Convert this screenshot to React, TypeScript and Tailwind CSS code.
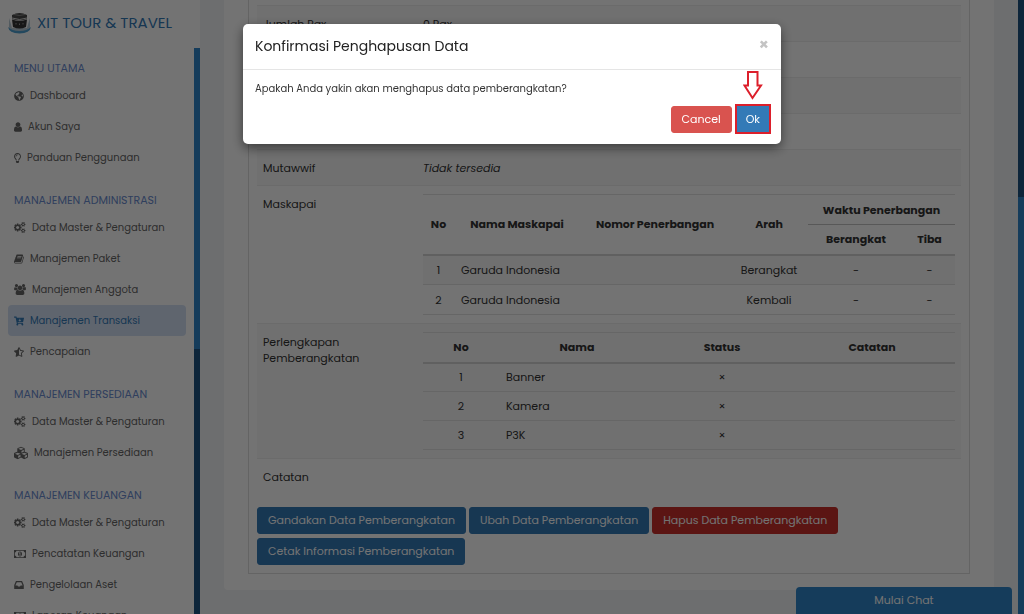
import type { ReactNode } from "react";
import {
  FaCartArrowDown,
  FaCubes,
  FaGlobeAmericas,
  FaRegLightbulb,
  FaStarHalfAlt,
} from "react-icons/fa";

type MenuItem = { label: string; icon: ReactNode; active?: boolean };
type MenuGroup = { title: string; items: MenuItem[] };

function UserIcon() {
  return (
    <svg viewBox="256 128 1280 1536" className="h-[10px] w-[8px]" fill="currentColor">
      <path d="M1536 1399q0 109-62.5 187t-150.5 78h-854q-88 0-150.5-78t-62.5-187q0-85 8.5-160.5t31.5-152 58.5-131 94-89 134.5-34.5q131 128 313 128t313-128q76 0 134.5 34.5t94 89 58.5 131 31.5 152 8.5 160.5zm-256-887q0 159-112.5 271.5t-271.5 112.5-271.5-112.5-112.5-271.5 112.5-271.5 271.5-112.5 271.5 112.5 112.5 271.5z" />
    </svg>
  );
}

function CogsIcon() {
  return (
    <svg viewBox="0 0 1920 1792" className="h-[11px] w-[12px]" fill="currentColor">
      <path d="M832 896q0-106-75-181t-181-75-181 75-75 181 75 181 181 75 181-75 75-181zm768 512q0-52-38-90t-90-38-90 38-38 90q0 53 37.5 90.5t90.5 37.5 90.5-37.5 37.5-90.5zm0-1024q0-52-38-90t-90-38-90 38-38 90q0 53 37.5 90.5t90.5 37.5 90.5-37.5 37.5-90.5zm-384 421v185q0 10-7 19.5t-16 10.5l-155 24q-11 35-32 76 34 48 90 115 7 11 7 20 0 12-7 19-23 30-82.5 89.5t-78.5 59.5q-11 0-21-7l-115-90q-37 19-77 31-11 108-23 155-7 24-30 24h-186q-11 0-20-7.5t-10-17.5l-23-153q-34-10-75-31l-118 89q-7 7-20 7-11 0-21-8-144-133-144-160 0-9 7-19 10-14 41-53t47-61q-23-44-35-82l-152-24q-10-1-17-9.5t-7-19.5v-185q0-10 7-19.5t16-10.5l155-24q11-35 32-76-34-48-90-115-7-11-7-20 0-12 7-20 22-30 82-89t79-59q11 0 21 7l115 90q34-18 77-32 11-108 23-154 7-24 30-24h186q11 0 20 7.5t10 17.5l23 153q34 10 75 31l118-89q8-7 20-7 11 0 21 8 144 133 144 160 0 8-7 19-12 16-42 54t-45 60q23 48 34 82l152 23q10 2 17 10.5t7 19.5zm640 533v140q0 16-149 31-12 27-30 52 51 113 51 138 0 4-4 7-122 71-124 71-8 0-46-47t-52-68q-20 2-30 2t-30-2q-14 21-52 68t-46 47q-2 0-124-71-4-3-4-7 0-25 51-138-18-25-30-52-149-15-149-31v-140q0-16 149-31 13-29 30-52-51-113-51-138 0-4 4-7 4-2 35-20t59-34 30-16q8 0 46 46.5t52 67.5q20-2 30-2t30 2q51-71 92-112l6-2q4 0 124 70 4 3 4 7 0 25-51 138 17 23 30 52 149 15 149 31zm0-1024v140q0 16-149 31-12 27-30 52 51 113 51 138 0 4-4 7-122 71-124 71-8 0-46-47t-52-68q-20 2-30 2t-30-2q-14 21-52 68t-46 47q-2 0-124-71-4-3-4-7 0-25 51-138-18-25-30-52-149-15-149-31v-140q0-16 149-31 13-29 30-52-51-113-51-138 0-4 4-7 4-2 35-20t59-34 30-16q8 0 46 46.5t52 67.5q20-2 30-2t30 2q51-71 92-112l6-2q4 0 124 70 4 3 4 7 0 25-51 138 17 23 30 52 149 15 149 31z" />
    </svg>
  );
}

function BookIcon() {
  return (
    <svg viewBox="64 128 1664 1536" className="h-[10px] w-[10px]" fill="currentColor">
      <path d="M1703 478q40 57 18 129l-275 906q-19 64-76.5 107.5t-122.5 43.5h-923q-77 0-148.5-53.5t-99.5-131.5q-24-67-2-127 0-4 3-27t4-37q1-8-3-21.5t-3-19.5q2-11 8-21t16.5-23.5 16.5-23.5q23-38 45-91.5t30-91.5q3-10 .5-30t-.5-28q3-11 17-28t17-23q21-36 42-92t25-90q1-9-2.5-32t.5-28q4-13 22-30.5t22-22.5q19-26 42.5-84.5t27.5-96.5q1-8-3-25.5t-2-26.5q2-8 9-18t18-23 17-21q8-12 16.5-30.5t15-35 16-36 19.5-32 26.5-23.5 36-11.5 47.5 5.5l-1 3q38-9 51-9h761q74 0 114 56t18 130l-274 906q-36 119-71.5 153.5t-128.5 34.5h-869q-27 0-38 15-11 16-1 43 24 70 144 70h923q29 0 56-15.5t35-41.5l300-987q7-22 5-57 38 15 59 43zm-1064 2q-4 13 2 22.5t20 9.5h608q13 0 25.5-9.5t16.5-22.5l21-64q4-13-2-22.5t-20-9.5h-608q-13 0-25.5 9.5t-16.5 22.5zm-83 256q-4 13 2 22.5t20 9.5h608q13 0 25.5-9.5t16.5-22.5l21-64q4-13-2-22.5t-20-9.5h-608q-13 0-25.5 9.5t-16.5 22.5z" />
    </svg>
  );
}

function UsersIcon() {
  return (
    <svg viewBox="64 0 1920 1792" className="h-[11px] w-[12px]" fill="currentColor">
      <path d="M657 896q-162 5-265 128h-134q-82 0-138-40.5t-56-118.5q0-353 124-353 6 0 43.5 21t97.5 42.5 119 21.5q67 0 133-23-5 37-5 66 0 159 93 294zm1071 637q0 120-73 189.5t-194 69.5h-874q-121 0-194-69.5t-73-189.5q0-53 3.5-103.5t14-109 26.5-108.5 43-97.5 62-81 85.5-53.5 111.5-20q10 0 43 21.5t73 48 107 48 135 21.5 135-21.5 107-48 73-48 43-21.5q61 0 111.5 20t85.5 53.5 62 81 43 97.5 26.5 108.5 14 109 3.5 103.5zm-1024-1277q0 106-75 181t-181 75-181-75-75-181 75-181 181-75 181 75 75 181zm704 384q0 159-112.5 271.5t-271.5 112.5-271.5-112.5-112.5-271.5 112.5-271.5 271.5-112.5 271.5 112.5 112.5 271.5zm576 225q0 78-56 118.5t-138 40.5h-134q-103-123-265-128 93-135 93-294 0-29-5-66 66 23 133 23 59 0 119-21.5t97.5-42.5 43.5-21q124 0 124 353zm-128-609q0 106-75 181t-181 75-181-75-75-181 75-181 181-75 181 75 75 181z" />
    </svg>
  );
}

function MoneyIcon() {
  return (
    <svg viewBox="0 256 1920 1280" className="h-[8px] w-[12px]" fill="currentColor">
      <path d="M768 1152h384v-96h-128v-448h-114l-148 137 77 80q42-37 55-57h2v288h-128v96zm512-256q0 70-21 142t-59.5 134-101.5 101-138 39-138-39-101.5-101-59.5-134-21-142 21-142 59.5-134 101.5-101 138-39 138 39 101.5 101 59.5 134 21 142zm512 256v-512q-106 0-181-75t-75-181h-1152q0 106-75 181t-181 75v512q106 0 181 75t75 181h1152q0-106 75-181t181-75zm128-832v1152q0 26-19 45t-45 19h-1792q-26 0-45-19t-19-45v-1152q0-26 19-45t45-19h1792q26 0 45 19t19 45z" />
    </svg>
  );
}

function InboxIcon() {
  return (
    <svg viewBox="128 256 1536 1280" className="h-[8px] w-[10px]" fill="currentColor">
      <path d="M1151 960h316q-1-3-2.5-8.5t-2.5-7.5l-212-496h-708l-212 496q-1 3-2.5 8.5t-2.5 7.5h316l95 192h320zm513 30v482q0 26-19 45t-45 19h-1408q-26 0-45-19t-19-45v-482q0-62 25-123l238-552q10-25 36.5-42t52.5-17h832q26 0 52.5 17t36.5 42l238 552q25 61 25 123z" />
    </svg>
  );
}

function Logo() {
  return (
    <svg viewBox="0 0 23 22" className="h-[22px] w-[23px]">
      <path d="M1 6Q3 12 4 16h15Q20 12 22 6v11Q17 20 11.500 20T1 17z" fill="#b9c9d4" />
      <path d="M0 15Q4 19 11.500 19T23 15Q22 21 11.500 21.500 1 21 0 15z" fill="#4f9fd0" />
      <path d="M4 3Q11.500-1 19 3v4Q11.500 9.500 4 7z" fill="#4a4a4a" />
      <path d="M4 7.500Q11.500 10 19 7.500L18 15Q11.500 18 5 15z" fill="#333" />
      <path d="M4 6Q11.500 9 19 6" fill="none" stroke="#cfcfcf" strokeWidth="1" />
      <path d="M6 2.500Q11.500 4.500 17 2.500" fill="none" stroke="#999" strokeWidth="0.800" />
      <path d="M8 11v1.500M11.500 11.500V13M15 11v1.500" stroke="#999" strokeWidth="1" />
    </svg>
  );
}

const menu: MenuGroup[] = [
  {
    title: "MENU UTAMA",
    items: [
      { label: "Dashboard", icon: <FaGlobeAmericas className="size-[10px]" /> },
      { label: "Akun Saya", icon: <UserIcon /> },
      { label: "Panduan Penggunaan", icon: <FaRegLightbulb className="h-[10px] w-[7px]" /> },
    ],
  },
  {
    title: "MANAJEMEN ADMINISTRASI",
    items: [
      { label: "Data Master & Pengaturan", icon: <CogsIcon /> },
      { label: "Manajemen Paket", icon: <BookIcon /> },
      { label: "Manajemen Anggota", icon: <UsersIcon /> },
      { label: "Manajemen Transaksi", icon: <FaCartArrowDown className="size-[10px]" />, active: true },
      { label: "Pencapaian", icon: <FaStarHalfAlt className="size-[10px]" /> },
    ],
  },
  {
    title: "MANAJEMEN PERSEDIAAN",
    items: [
      { label: "Data Master & Pengaturan", icon: <CogsIcon /> },
      { label: "Manajemen Persediaan", icon: <FaCubes className="size-[14px]" /> },
    ],
  },
  {
    title: "MANAJEMEN KEUANGAN",
    items: [
      { label: "Data Master & Pengaturan", icon: <CogsIcon /> },
      { label: "Pencatatan Keuangan", icon: <MoneyIcon /> },
      { label: "Pengelolaan Aset", icon: <InboxIcon /> },
      { label: "Laporan Keuangan", icon: <MoneyIcon /> },
    ],
  },
];

const flights = [
  { no: 1, name: "Garuda Indonesia", direction: "Berangkat" },
  { no: 2, name: "Garuda Indonesia", direction: "Kembali" },
];

const equipment = ["Banner", "Kamera", "P3K"];

function Sidebar() {
  return (
    <aside className="flex h-full w-[200px] shrink-0 flex-col bg-white">
      <a href="#" className="flex h-[46px] shrink-0 items-center gap-[6px] pl-2 text-[15px] text-[#337ab7]">
        <Logo />
        XIT TOUR &amp; TRAVEL
      </a>
      <div className="mt-[2px] flex min-h-0 flex-1">
        <nav className="min-w-0 flex-1 overflow-hidden pt-2 pr-2 pl-2">
          {menu.map((group) => (
            <section key={group.title} className="mb-[15px]">
              <h2 className="px-[6px] text-[11px] leading-6 whitespace-nowrap text-[#6a8cd0]">{group.title}</h2>
              <ul>
                {group.items.map((item) => (
                  <li key={item.label}>
                    <a
                      href="#"
                      className={
                        item.active
                          ? "flex h-[31px] items-center gap-[6px] rounded bg-[#d3e0f4] px-[6px] text-[10px] whitespace-nowrap text-[#337ab7]"
                          : "flex h-[31px] items-center gap-[6px] px-[6px] text-[10px] whitespace-nowrap text-[#666]"
                      }
                    >
                      {item.icon}
                      {item.label}
                    </a>
                  </li>
                ))}
              </ul>
            </section>
          ))}
        </nav>
        <div className="w-[6px] shrink-0 bg-[#1d5380]">
          <div className="h-[301px] bg-[#2f86c9]" />
        </div>
      </div>
    </aside>
  );
}

function DetailRow({ label, shaded, children }: { label?: string; shaded?: boolean; children?: ReactNode }) {
  return (
    <tr className={shaded ? "h-9 border-t border-[#eee] bg-[#f9f9f9]" : "h-9 border-t border-[#eee]"}>
      <th scope="row" className="px-[6px] pt-[10px] pb-[9px] text-left align-top font-normal">
        {label}
      </th>
      <td className="px-[6px] align-middle">{children}</td>
    </tr>
  );
}

function FlightTable() {
  return (
    <table className="my-2 w-full table-fixed border-b border-[#e2e2e2]">
      <colgroup>
        <col className="w-[31px]" />
        <col className="w-[126px]" />
        <col />
        <col className="w-[78px]" />
        <col className="w-[96px]" />
        <col className="w-[51px]" />
      </colgroup>
      <thead className="border-t border-b-2 border-t-[#e2e2e2] border-b-[#d4d4d4]">
        <tr className="h-[30px]">
          <th rowSpan={2}>No</th>
          <th rowSpan={2}>Nama Maskapai</th>
          <th rowSpan={2}>Nomor Penerbangan</th>
          <th rowSpan={2}>Arah</th>
          <th colSpan={2} className="border-b border-[#c4c4c4]">
            Waktu Penerbangan
          </th>
        </tr>
        <tr className="h-[30px]">
          <th>Berangkat</th>
          <th>Tiba</th>
        </tr>
      </thead>
      <tbody>
        {flights.map((flight) => (
          <tr key={flight.no} className="h-[30px] border-t border-[#e2e2e2] text-center odd:bg-[#f9f9f9]">
            <td>{flight.no}</td>
            <td className="pl-[7px] text-left">{flight.name}</td>
            <td></td>
            <td>{flight.direction}</td>
            <td>-</td>
            <td>-</td>
          </tr>
        ))}
      </tbody>
    </table>
  );
}

function EquipmentTable() {
  return (
    <table className="my-2 w-full table-fixed border-b border-[#e2e2e2]">
      <colgroup>
        <col className="w-[76px]" />
        <col className="w-[156px]" />
        <col className="w-[134px]" />
        <col />
      </colgroup>
      <thead className="border-t border-b-2 border-t-[#e2e2e2] border-b-[#d4d4d4]">
        <tr className="h-[30px]">
          <th>No</th>
          <th>Nama</th>
          <th>Status</th>
          <th>Catatan</th>
        </tr>
      </thead>
      <tbody>
        {equipment.map((name, i) => (
          <tr key={name} className="h-[29px] border-t border-[#e2e2e2] text-center">
            <td>{i + 1}</td>
            <td className="pl-[7px] text-left">{name}</td>
            <td>×</td>
            <td></td>
          </tr>
        ))}
      </tbody>
    </table>
  );
}

function ActionButton({ danger, children }: { danger?: boolean; children: ReactNode }) {
  return (
    <button
      type="button"
      className={
        danger
          ? "h-[27px] rounded-[3px] border border-[#c9302c] bg-[#c9302c] px-[10px] text-[11px] text-white"
          : "h-[27px] rounded-[3px] border border-[#337ab7] bg-[#337ab7] px-[10px] text-[11px] text-white"
      }
    >
      {children}
    </button>
  );
}

function DepartureDetail() {
  return (
    <main className="min-w-0 flex-1 overflow-hidden px-6">
      <div className="rounded-b bg-white px-6 pb-4">
        <div className="border-x border-b border-[#ddd] px-2 pt-[5px] pb-2">
          <table className="w-full table-fixed text-[11px] leading-4 text-[#333]">
            <colgroup>
              <col className="w-[160px]" />
              <col />
            </colgroup>
            <tbody>
              <DetailRow label="Jumlah Pax" shaded>
                0 Pax
              </DetailRow>
              <DetailRow />
              <DetailRow shaded />
              <DetailRow />
              <DetailRow label="Mutawwif" shaded>
                <em>Tidak tersedia</em>
              </DetailRow>
              <DetailRow label="Maskapai">
                <FlightTable />
              </DetailRow>
              <DetailRow label="Perlengkapan Pemberangkatan" shaded>
                <EquipmentTable />
              </DetailRow>
              <DetailRow label="Catatan" />
            </tbody>
          </table>
          <div className="mt-3 flex flex-wrap gap-x-[3px] gap-y-1">
            <ActionButton>Gandakan Data Pemberangkatan</ActionButton>
            <ActionButton>Ubah Data Pemberangkatan</ActionButton>
            <ActionButton danger>Hapus Data Pemberangkatan</ActionButton>
            <ActionButton>Cetak Informasi Pemberangkatan</ActionButton>
          </div>
        </div>
      </div>
    </main>
  );
}

function ConfirmModal() {
  return (
    <div className="fixed inset-0 bg-black/55 px-4 pt-6">
      <div
        role="dialog"
        aria-modal="true"
        aria-labelledby="confirm-title"
        className="mx-auto max-w-[538px] rounded-[5px] bg-white shadow-[0_4px_12px_rgba(0,0,0,0.5)]"
      >
        <header className="flex h-[46px] items-center justify-between border-b border-[#e5e5e5] px-3">
          <h1 id="confirm-title" className="text-[14px] text-[#222]">
            Konfirmasi Penghapusan Data
          </h1>
          <button type="button" aria-label="Close" className="mb-1 text-[16px] leading-4 font-bold text-[#c4c4c4]">
            ×
          </button>
        </header>
        <p className="px-3 pt-[11px] text-[10px] leading-4 text-[#333]">
          Apakah Anda yakin akan menghapus data pemberangkatan?
        </p>
        <div className="flex items-center justify-end gap-[3px] px-[10px] pt-[7px] pb-[10px] text-[11px] text-white">
          <button type="button" className="h-[27px] rounded-[3px] border border-[#d9534f] bg-[#d9534f] px-[10px]">
            Cancel
          </button>
          <div className="relative">
            <button type="button" className="block h-[30px] border-2 border-[#dc1f2b] bg-[#337ab7] px-[9px]">
              Ok
            </button>
            <svg
              viewBox="0 0 20 30"
              className="absolute bottom-full left-1/2 mb-1 h-[30px] w-[20px] -translate-x-1/2"
              fill="#fff"
              stroke="#dc1f2b"
              strokeWidth="2"
            >
              <path d="M5 2h9.500v13.500h3.500L9.500 28 1.500 15.500H5z" />
            </svg>
          </div>
        </div>
      </div>
    </div>
  );
}

export default function App() {
  return (
    <div className="flex h-screen overflow-hidden bg-[#f1f3f7] font-[Poppins,Inter,sans-serif]">
      <Sidebar />
      <DepartureDetail />
      <div className="w-[6px] shrink-0 bg-[#1d5380]">
        <div className="mt-[197px] h-full bg-[#2f86c9]" />
      </div>
      <button
        type="button"
        className="fixed right-3 bottom-0 h-[27px] w-[216px] rounded-t bg-[#2f86c9] text-[11px] text-white"
      >
        Mulai Chat
      </button>
      <ConfirmModal />
    </div>
  );
}
